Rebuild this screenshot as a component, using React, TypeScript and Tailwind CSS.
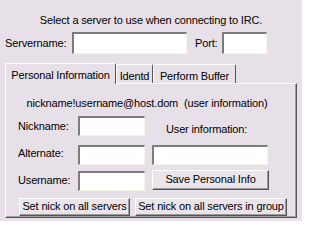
import React from "react";

const field =
  "bg-white border-t-2 border-l-2 border-b border-r border-t-[#7c7c7c] border-l-[#7c7c7c] border-b-[#f7f3ea] border-r-[#f7f3ea]";

const btn =
  "bg-[#ebe5eb] border border-t-white border-l-white border-b-[#555] border-r-[#555] shadow-[inset_-1px_-1px_0_#9a9a9a] flex items-center justify-center leading-none whitespace-nowrap";

const tab =
  "border-t border-l border-r border-t-white border-l-white border-r-[#555] rounded-t-[2px] flex items-start justify-center pt-[3px] whitespace-nowrap";

const Field = ({ w, h = "h-[20px]" }: { w: string; h?: string }) => (
  <div className={`${field} ${w} ${h}`} />
);

export default function App() {
  return (
    <div className="w-[302px] h-[221px] overflow-hidden bg-[#e8e0e8] text-black text-[11px] tracking-[-0.15px] font-['Liberation_Sans',Arial,sans-serif] pt-[13px] px-[5px]">
      <div className="text-center h-[14px] leading-[14px] whitespace-nowrap">
        Select a server to use when connecting to IRC.
      </div>

      <div className="flex items-center mt-[5px] h-[22px] whitespace-nowrap">
        <span className="w-[67px]">Servername:</span>
        <Field w="w-[115px]" h="h-[22px]" />
        <span className="w-[27px] ml-[8px]">Port:</span>
        <Field w="w-[45px]" h="h-[22px]" />
      </div>

      <div className="flex items-end mt-[8px] h-[21px]">
        <div className={`${tab} h-[21px] w-[111px] relative top-[1px] bg-[#e8e0e8] z-10`}>
          Personal Information
        </div>
        <div className={`${tab} h-[19px] w-[37px]`}>Identd</div>
        <div className={`${tab} h-[19px] w-[83px]`}>Perform Buffer</div>
      </div>

      <div className="w-[292px] h-[135px] border border-t-white border-l-white border-b-[#555] border-r-[#555] shadow-[inset_-1px_-1px_0_#a0a0a0] pt-[12px] whitespace-nowrap">
        <div className="text-center h-[14px] leading-[14px] pr-[8px]">
          nickname!username@host.dom&nbsp; (user information)
        </div>

        <div className="flex items-center mt-[5px] pl-[12px]">
          <span className="w-[60px]">Nickname:</span>
          <Field w="w-[67px]" />
          <span className="ml-[21px] mt-[6px]">User information:</span>
        </div>

        <div className="flex items-center mt-[7px] pl-[12px]">
          <span className="w-[60px] -mt-[3px]">Alternate:</span>
          <Field w="w-[67px]" />
          <Field w="w-[116px] ml-[7px]" />
        </div>

        <div className="flex items-center mt-[6px] pl-[12px]">
          <span className="w-[60px]">Username:</span>
          <Field w="w-[67px]" />
          <button className={`${btn} w-[117px] h-[20px] ml-[7px] -mt-[2px]`}>
            Save Personal Info
          </button>
        </div>

        <div className="flex items-center mt-[7px] pl-[13px] gap-[5px]">
          <button className={`${btn} w-[111px] h-[18px]`}>
            Set nick on all servers
          </button>
          <button className={`${btn} w-[152px] h-[18px]`}>
            Set nick on all servers in group
          </button>
        </div>
      </div>
    </div>
  );
}
